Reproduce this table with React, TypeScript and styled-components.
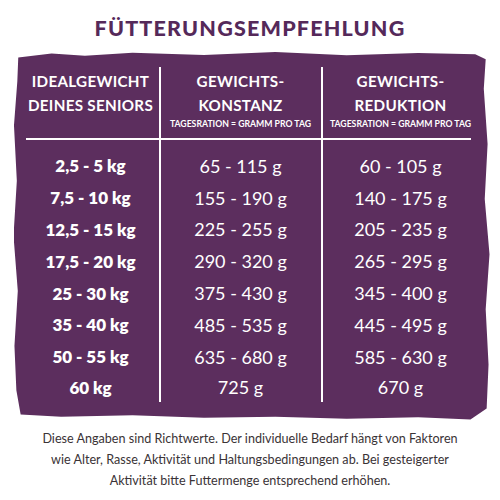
import React from 'react';
import styled, { createGlobalStyle } from 'styled-components';

const GlobalStyle = createGlobalStyle`
    html, body {
        margin: 0;
        padding: 0;
        background: #ffffff;
    }
    body {
        font-family: Lato, "Open Sans", sans-serif;
    }
`;

const PURPLE = '#5c2e5e';

const Page = styled.div`
    width: 500px;
    height: 500px;
    display: flex;
    flex-direction: column;
    align-items: center;
    overflow: hidden;
`;

const Title = styled.h1`
    margin: 14px 0 0;
    font-family: Lato, sans-serif;
    font-weight: 900;
    font-size: 21.5px;
    line-height: 28px;
    letter-spacing: 1.2px;
    color: #55295a;
`;

const Panel = styled.div`
    width: 476px;
    margin: 10px 0 0 3px;
    box-sizing: border-box;
    padding: 15px 10px 18px 7px;
    background: ${PURPLE};
    clip-path: polygon(
        1% 1.5%, 8% 0.4%, 15% 1%, 25% 0.2%, 40% 0.8%, 55% 0%, 70% 0.9%, 85% 0.3%, 97% 0.6%,
        99.2% 2%, 98.8% 10%, 99.6% 25%, 99% 40%, 100% 55%, 99.2% 70%, 99.8% 85%, 99.4% 97%,
        96% 100%, 85% 99.4%, 70% 99.8%, 55% 99.2%, 40% 99.5%, 25% 98.8%, 10% 99.2%, 1.5% 98.6%,
        0.6% 92%, 0.2% 80%, 0.9% 65%, 0% 50%, 0.7% 35%, 0.1% 20%, 0.8% 8%
    );
`;

const Table = styled.div`
    display: grid;
    grid-template-columns: 138px 162px 158px;
    color: #ffffff;
`;

const Cell = styled.div<{ $divider?: boolean }>`
    display: flex;
    flex-direction: column;
    align-items: center;
    justify-content: center;
    text-align: center;
    border-left: ${(p) => (p.$divider ? '2px solid #ffffff' : '2px solid transparent')};
`;

const HeadCell = styled(Cell)`
    justify-content: flex-start;
    height: 71px;
    padding-top: 2px;
    box-sizing: border-box;
`;

const HeadMain = styled.div`
    font-family: Lato, sans-serif;
    font-weight: 700;
    font-size: 15.2px;
    line-height: 24px;
    letter-spacing: 0.3px;
`;

const HeadSub = styled.div`
    font-family: Lato, sans-serif;
    font-weight: 700;
    font-size: 8.7px;
    line-height: 12px;
    margin-top: 1px;
    white-space: nowrap;
`;

const Rule = styled.div`
    grid-column: 1 / -1;
    height: 2px;
    margin: 0 8px 0 5px;
    background: #ffffff;
`;

const BodyCell = styled(Cell)<{ $first?: boolean; $last?: boolean }>`
    height: ${(p) => (p.$last ? '29px' : '31.8px')};
    padding-top: ${(p) => (p.$first ? '10px' : '0')};
`;

const Weight = styled.span`
    font-family: Lato, sans-serif;
    font-weight: 800;
    font-size: 17px;
`;

const Amount = styled.span`
    font-family: Lato, sans-serif;
    font-weight: 400;
    font-size: 18px;
`;

const Note = styled.p`
    margin: 8px 0 0;
    width: 420px;
    text-align: center;
    font-family: Lato, sans-serif;
    font-size: 12.6px;
    line-height: 21px;
    color: #3a3336;
`;

const rows: [string, string, string][] = [
    ['2,5 - 5 kg', '65 - 115 g', '60 - 105 g'],
    ['7,5 - 10 kg', '155 - 190 g', '140 - 175 g'],
    ['12,5 - 15 kg', '225 - 255 g', '205 - 235 g'],
    ['17,5 - 20 kg', '290 - 320 g', '265 - 295 g'],
    ['25 - 30 kg', '375 - 430 g', '345 - 400 g'],
    ['35 - 40 kg', '485 - 535 g', '445 - 495 g'],
    ['50 - 55 kg', '635 - 680 g', '585 - 630 g'],
    ['60 kg', '725 g', '670 g'],
];

const App = () => {
    return (
        <Page>
            <GlobalStyle />
            <Title>FÜTTERUNGSEMPFEHLUNG</Title>
            <Panel>
                <Table>
                    <HeadCell>
                        <HeadMain>IDEALGEWICHT</HeadMain>
                        <HeadMain>DEINES SENIORS</HeadMain>
                    </HeadCell>
                    <HeadCell $divider>
                        <HeadMain>GEWICHTS-</HeadMain>
                        <HeadMain>KONSTANZ</HeadMain>
                        <HeadSub>TAGESRATION = GRAMM PRO TAG</HeadSub>
                    </HeadCell>
                    <HeadCell $divider>
                        <HeadMain>GEWICHTS-</HeadMain>
                        <HeadMain>REDUKTION</HeadMain>
                        <HeadSub>TAGESRATION = GRAMM PRO TAG</HeadSub>
                    </HeadCell>
                    <Rule />
                    {rows.map((r, i) => {
                        const first = i === 0;
                        const last = i === rows.length - 1;
                        return (
                            <React.Fragment key={r[0]}>
                                <BodyCell $first={first} $last={last}>
                                    <Weight>{r[0]}</Weight>
                                </BodyCell>
                                <BodyCell $divider $first={first} $last={last}>
                                    <Amount>{r[1]}</Amount>
                                </BodyCell>
                                <BodyCell $divider $first={first} $last={last}>
                                    <Amount>{r[2]}</Amount>
                                </BodyCell>
                            </React.Fragment>
                        );
                    })}
                </Table>
            </Panel>
            <Note>
                Diese Angaben sind Richtwerte. Der individuelle Bedarf hängt von Faktoren wie Alter, Rasse,
                Aktivität und Haltungsbedingungen ab. Bei gesteigerter Aktivität bitte Futtermenge
                entsprechend erhöhen.
            </Note>
        </Page>
    );
};

export default App;
